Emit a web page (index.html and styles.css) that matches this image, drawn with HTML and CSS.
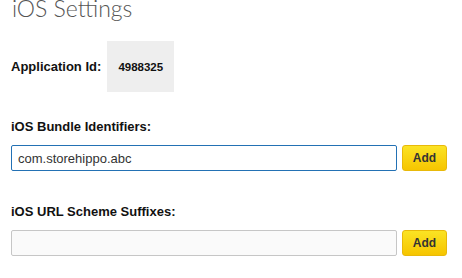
FILE: index.html
```html
<!DOCTYPE html>
<html lang="en">
<head>
    <meta charset="UTF-8">
    <meta name="viewport" content="width=device-width, initial-scale=1.0">
    <title>iOS Settings</title>
    <link rel="stylesheet" href="styles.css">
</head>
<body>

    <div class="container">
        <h2 class="title">iOS Settings</h2>

        <div class="app-row">
            <span class="label">Application Id:</span>
            <span class="app-id">4988325</span>
        </div>

        <div class="field">
            <label class="label" for="bundle">iOS Bundle Identifiers:</label>
            <div class="input-row">
                <input type="text" id="bundle" class="focused" value="com.storehippo.abc">
                <button type="button">Add</button>
            </div>
        </div>

        <div class="field">
            <label class="label" for="scheme">iOS URL Scheme Suffixes:</label>
            <div class="input-row">
                <input type="text" id="scheme">
                <button type="button">Add</button>
            </div>
        </div>
    </div>

</body>
</html>
```

FILE: styles.css
```css
body {
    margin: 0;
    font-family: "Liberation Sans", Arial, sans-serif;
    background: white;
    color: #111;
}
.container {
    padding: 0 11px;
}
.title {
    font-family: Lato, "Open Sans", sans-serif;
    font-weight: 300;
    font-size: 23px;
    line-height: 24px;
    color: #555;
    margin: -4px 0 0 1px;
}
.label {
    display: block;
    font-size: 13px;
    line-height: 15px;
    font-weight: bold;
    color: #111;
}
.app-row {
    display: flex;
    align-items: center;
    margin-top: 21px;
}
.app-id {
    display: flex;
    align-items: center;
    justify-content: center;
    width: 67px;
    height: 51px;
    margin-left: 6px;
    background-color: #eeeeee;
    font-size: 11.5px;
    font-weight: bold;
}
.field {
    margin-top: 27px;
}
.field + .field {
    margin-top: 33px;
}
.input-row {
    display: flex;
    gap: 5px;
    margin-top: 11px;
}
input {
    width: 386px;
    height: 26px;
    box-sizing: border-box;
    padding: 0 6px;
    border: 1px solid #c6c6c6;
    border-radius: 2px;
    background: #fafafa;
    font-family: "Liberation Sans", Arial, sans-serif;
    font-size: 13px;
    color: #333;
    outline: none;
}
input.focused {
    border-color: #2371b4;
    background: white;
}
button {
    width: 45px;
    height: 26px;
    box-sizing: border-box;
    border: 1px solid #e8b90a;
    border-radius: 3px;
    background: linear-gradient(#fbe324, #f6c500);
    font-family: "Liberation Sans", Arial, sans-serif;
    font-size: 12px;
    font-weight: bold;
    color: #333;
    padding: 0;
    cursor: pointer;
}
```
